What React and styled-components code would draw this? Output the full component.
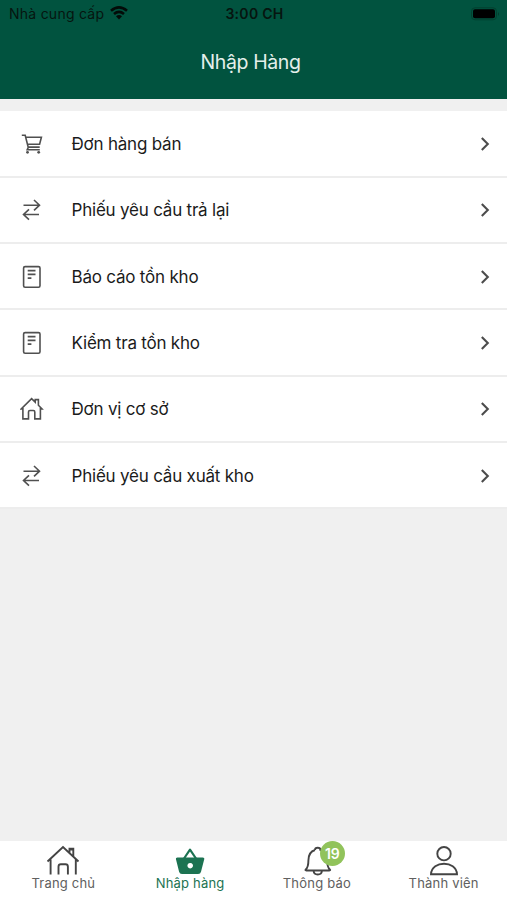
import React from 'react';
import styled, { createGlobalStyle } from 'styled-components';

const GlobalStyle = createGlobalStyle`
  * { box-sizing: border-box; }
  body { margin: 0; background: #f0f0f0; font-family: Inter, Roboto, sans-serif; }
`;

const Screen = styled.div`
  display: flex;
  flex-direction: column;
  width: 507px;
  height: 900px;
  overflow: hidden;
  background: #f0f0f0;
`;

const Header = styled.header`
  height: 98.5px;
  flex: none;
  background: #01533f;
`;

const StatusBar = styled.div`
  display: grid;
  grid-template-columns: 1fr auto 1fr;
  align-items: center;
  height: 27px;
  padding: 0 7px 0 9px;
  color: #06150f;
  font-size: 14px;
`;

const Carrier = styled.div`
  display: flex;
  align-items: center;
  gap: 6px;
  letter-spacing: 0.25px;
  white-space: nowrap;
  svg { display: block; margin-top: -2px; }
`;

const Clock = styled.div`
  font-weight: 600;
  letter-spacing: 0.3px;
`;

const Battery = styled.svg`
  display: block;
  justify-self: end;
`;

const Title = styled.h1`
  margin: 21px 0 0;
  padding-right: 6px;
  color: #e4efeb;
  font-size: 19.5px;
  font-weight: 400;
  line-height: 28px;
  letter-spacing: -0.4px;
  text-align: center;
`;

const Menu = styled.nav`
  flex: 1;
  padding-top: 12.7px;
`;

const MenuRow = styled.a`
  display: flex;
  align-items: center;
  height: 66.35px;
  padding: 1.4px 12px 0 20px;
  background: #fff;
  border-bottom: 2px solid #ededed;
  color: #1b1b1b;
`;

const RowIcon = styled.svg`
  flex: none;
  width: 24px;
  height: 24px;
  margin-right: 27.5px;
  fill: none;
  stroke: #505050;
  stroke-width: 1.6;
`;

const RowLabel = styled.span`
  flex: 1;
  font-size: 17px;
  line-height: 24px;
  letter-spacing: -0.21px;
  white-space: nowrap;
`;

const Chevron = styled.svg`
  width: 20px;
  height: 20px;
  fill: none;
  stroke: #4c4c4c;
  stroke-width: 2.1;
`;

const TabBar = styled.footer`
  display: grid;
  grid-template-columns: repeat(4, 1fr);
  flex: none;
  height: 59px;
  padding-top: 3px;
  background: #fff;
`;

const Tab = styled.div`
  display: flex;
  flex-direction: column;
  align-items: center;
  color: ${({ $active }) => ($active ? '#1c7352' : '#606060')};
`;

const TabIcon = styled.div`
  position: relative;
  width: 36px;
  height: 31px;
  svg { display: block; fill: none; stroke: #444; stroke-width: 1.9; }
`;

const TabLabel = styled.span`
  font-size: 13px;
  line-height: 16px;
  letter-spacing: 0.2px;
  white-space: nowrap;
`;

const Badge = styled.span`
  position: absolute;
  left: 21px;
  top: -3.5px;
  width: 25px;
  height: 25px;
  border-radius: 50%;
  background: #91c35b;
  color: #fff;
  font-size: 14px;
  font-weight: 600;
  line-height: 25px;
  text-align: center;
`;

const rowIcons = {
  cart: (
    <>
      <path d="M1.8 3.2h3.4l3 11.9h11.5M5.8 5.3h15.6l-1.8 7H7.6M8.4 15.1l-1.2 2.7h12.6" />
      <circle cx="7.5" cy="20.3" r="1.4" fill="#505050" stroke="none" />
      <circle cx="18.7" cy="20.3" r="1.4" fill="#505050" stroke="none" />
    </>
  ),
  swap: <path d="M3.5 7.2h16M14 2l5.5 5.2-5.5 5.2M19 16.5H3.5M9 11.3l-5.5 5.2L9 21.7" />,
  report: (
    <>
      <rect x="3.6" y="1.6" width="16.4" height="20.6" rx="1.5" />
      <path d="M7.7 5.6h7.8M7.7 9.4h7.8M7.7 13.1h3.7" />
    </>
  ),
  home: <path d="M2.9 11.9H1.2L11.6 1.6l3.6 3.5V2.6h3.2v5.6l3.6 3.7h-1.6v10h-5.6v-7q0-1.4-1.4-1.4h-3.5q-1.4 0-1.4 1.4v7H2.9z" />,
};

const rows = [
  ['cart', 'Đơn hàng bán'],
  ['swap', 'Phiếu yêu cầu trả lại'],
  ['report', 'Báo cáo tồn kho'],
  ['report', 'Kiểm tra tồn kho'],
  ['home', 'Đơn vị cơ sở'],
  ['swap', 'Phiếu yêu cầu xuất kho'],
];

const tabIcons = {
  home: <path d="M2.5 17.5 18 3l15.5 14.5M24.5 9V4.6h3.8v7.9M24.5 5.6h3.8M5.6 15.5v15M30.8 15.5v15M13.5 30.5V22.7q0-2.4 2.4-2.4h4.6q2.4 0 2.4 2.4v7.8" />,
  basket: (
    <>
      <path d="M12 14.5 18 5.6l6 8.9" stroke="#1c7352" strokeWidth="2.2" strokeLinejoin="round" />
      <path fillRule="evenodd" fill="#1c7352" stroke="none" d="M5.4 13.4h25.4q1.9 0 1.5 1.7l-3.3 12.7q-.5 2.2-2.9 2.2H10q-2.4 0-2.9-2.2L3.9 15.1q-.4-1.7 1.5-1.7M18.2 18.9a2.8 2.8 0 1 0 .01 0" />
    </>
  ),
  bell: <path d="M16 6c0-3 5.4-3 5.4 0 5 1.5 6.8 5.5 6.8 10.5 0 5 .7 7.2 2.6 8.9q1 1.1-.5 1.1H7.3q-1.5 0-.5-1.1c1.9-1.7 2.6-3.9 2.6-8.9S11 7.5 16 6M14.5 26.5c.5 5.4 8 5.4 8.5 0" />,
  member: (
    <>
      <circle cx="18" cy="9.7" r="6.7" />
      <path d="M5 30.2c.8-14 25.2-14 26 0z" />
    </>
  ),
};

const tabs = [
  { icon: 'home', label: 'Trang chủ' },
  { icon: 'basket', label: 'Nhập hàng', active: true },
  { icon: 'bell', label: 'Thông báo', count: 19 },
  { icon: 'member', label: 'Thành viên' },
];

export default function App() {
  return (
    <Screen>
      <GlobalStyle />
      <Header>
        <StatusBar>
          <Carrier>
            Nhà cung cấp
            <svg width="18" height="14" viewBox="0 0 18 14" fill="none" stroke="#030b08" strokeWidth="2.6">
              <path d="M1 4.8Q9-2 17 4.8M4 8Q9 3.8 14 8" />
              <path d="M6 10.2q3-2.4 6 0L9 13.5z" fill="#030b08" stroke="none" />
            </svg>
          </Carrier>
          <Clock>3:00 CH</Clock>
          <Battery width="29" height="14" viewBox="0 0 29 14">
            <rect x=".5" y=".8" width="25" height="12" rx="3.5" fill="none" stroke="#03402f" />
            <rect x="2" y="2.3" width="22" height="9" rx="2" fill="#000" />
            <path d="M27 5q2 2 0 4z" fill="#033c2d" />
          </Battery>
        </StatusBar>
        <Title>Nhập Hàng</Title>
      </Header>
      <Menu>
        {rows.map(([icon, label]) => (
          <MenuRow key={label}>
            <RowIcon viewBox="0 0 24 24">{rowIcons[icon]}</RowIcon>
            <RowLabel>{label}</RowLabel>
            <Chevron viewBox="0 0 20 20"><path d="m6.8 4 6 6-6 6" /></Chevron>
          </MenuRow>
        ))}
      </Menu>
      <TabBar>
        {tabs.map(({ icon, label, active, count }) => (
          <Tab key={label} $active={active}>
            <TabIcon>
              <svg width="36" height="32" viewBox="0 0 36 32">{tabIcons[icon]}</svg>
              {count && <Badge>{count}</Badge>}
            </TabIcon>
            <TabLabel>{label}</TabLabel>
          </Tab>
        ))}
      </TabBar>
    </Screen>
  );
}
